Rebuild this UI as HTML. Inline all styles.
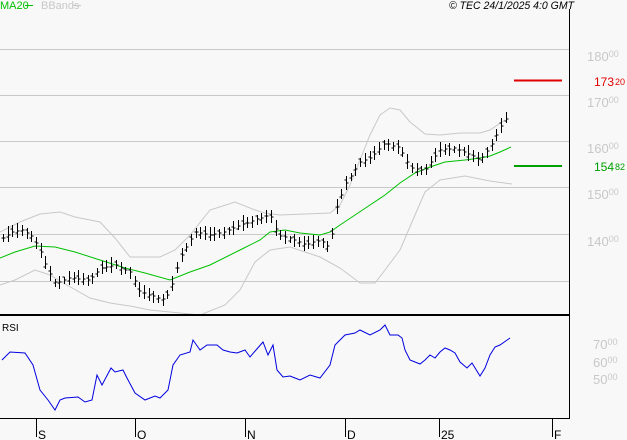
<!DOCTYPE html>
<html><head><meta charset="utf-8"><style>
html,body{margin:0;padding:0;background:#f8f8f8;width:627px;height:440px;overflow:hidden}
svg{display:block;font-family:"Liberation Sans",sans-serif}
</style></head><body>
<svg id="s" width="627" height="440" viewBox="0 0 627 440" xmlns="http://www.w3.org/2000/svg">
<rect width="627" height="440" fill="#f8f8f8"/>
<g stroke="#c8c8c8" stroke-width="1">
<line x1="0" y1="49.5" x2="569" y2="49.5"/><line x1="0" y1="95.5" x2="569" y2="95.5"/>
<line x1="0" y1="141.5" x2="569" y2="141.5"/><line x1="0" y1="187.5" x2="569" y2="187.5"/>
<line x1="0" y1="234.5" x2="569" y2="234.5"/><line x1="0" y1="281.5" x2="569" y2="281.5"/>
</g>
<g fill="#c8c8c8" font-size="13">
<text x="587" y="61">180<tspan font-size="9" dy="-4">00</tspan></text>
<text x="587" y="107">170<tspan font-size="9" dy="-4">00</tspan></text>
<text x="587" y="153">160<tspan font-size="9" dy="-4">00</tspan></text>
<text x="587" y="199">150<tspan font-size="9" dy="-4">00</tspan></text>
<text x="587" y="246">140<tspan font-size="9" dy="-4">00</tspan></text>
<text x="593" y="349">70<tspan font-size="9" dy="-4">00</tspan></text>
<text x="593" y="367">60<tspan font-size="9" dy="-4">00</tspan></text>
<text x="593" y="384">50<tspan font-size="9" dy="-4">00</tspan></text>
</g>
<text x="0" y="9" font-size="11" fill="#00c000">MA20</text><line x1="25" y1="5.5" x2="33" y2="5.5" stroke="#00c000"/>
<text x="41" y="9" font-size="11" fill="#c8c8c8">BBands</text><line x1="73" y1="5.5" x2="81" y2="5.5" stroke="#c8c8c8"/>
<text x="449" y="9" font-size="11" font-style="italic" fill="#000" textLength="125" lengthAdjust="spacingAndGlyphs">© TEC 24/1/2025 4:0 GMT</text>
<polyline fill="none" stroke="#c8c8c8" points="0,232 20,222 40,214 60,212 75,217 100,222 115,238 130,257 160,257 175,250 190,235 210,210 235,202 255,210 265,213 280,215 330,213 340,205 350,185 360,160 370,135 380,115 390,108 400,110 410,122 425,134 440,135 460,133 480,133 490,130 505,120"/>
<polyline fill="none" stroke="#c8c8c8" points="0,285 15,280 35,270 50,275 65,284 90,298 110,303 130,306 150,310 170,312 200,315 225,305 240,290 255,262 270,250 290,247 320,257 340,268 360,283 375,283 385,270 400,250 415,215 425,192 440,180 465,176 490,181 512,184"/>
<polyline fill="none" stroke="#00c000" points="0,258 15,252 35,246 55,247 75,252 100,260 125,268 145,273 170,280 190,272 210,265 240,250 260,240 270,232 285,230 300,233 320,235 330,232 340,225 355,215 370,205 385,195 400,183 415,173 430,167 445,162 465,160 480,158 490,156 500,152 511,147"/>
<g id="bars" stroke="#000" stroke-width="1" fill="none"></g>
<line x1="514" y1="80.5" x2="562" y2="80.5" stroke="#e00000" stroke-width="2"/>
<text x="594" y="86" font-size="12" fill="#e00000">173<tspan font-size="9" dx="1" dy="-1">20</tspan></text>
<line x1="514" y1="166" x2="562" y2="166" stroke="#00a000" stroke-width="2"/>
<text x="594" y="171" font-size="12" fill="#00a000">154<tspan font-size="9" dx="1" dy="-1">82</tspan></text>
<line x1="569.5" y1="9" x2="569.5" y2="419" stroke="#000"/>
<rect x="0" y="314" width="570" height="2" fill="#000"/>
<line x1="0" y1="418.5" x2="570" y2="418.5" stroke="#000"/>
<text x="2" y="331" font-size="10" fill="#000">RSI</text>
<polyline fill="none" stroke="#0000e0" points="2,360 10,352 25,353 33,365 40,390 48,400 55,410 60,400 65,398 78,397 85,402 92,400 97,375 102,385 111,368 115,372 123,370 127,378 135,393 145,400 155,396 160,398 168,390 173,365 180,355 190,352 193,340 200,350 207,345 217,345 223,350 230,352 237,353 245,350 250,357 256,350 263,342 268,355 273,345 277,370 283,377 290,376 295,378 300,380 310,375 320,378 330,365 335,345 345,335 355,333 360,330 370,335 380,330 385,325 390,335 398,335 402,338 405,350 410,360 420,364 425,360 430,355 435,358 440,352 445,348 450,350 455,353 460,362 467,368 472,363 480,376 485,368 490,355 495,347 500,345 510,338"/>
<g stroke="#000"><line x1="36.5" y1="419" x2="36.5" y2="437"/><line x1="135.5" y1="419" x2="135.5" y2="437"/><line x1="245.5" y1="419" x2="245.5" y2="437"/><line x1="345.5" y1="419" x2="345.5" y2="437"/><line x1="439.5" y1="419" x2="439.5" y2="437"/><line x1="552.5" y1="419" x2="552.5" y2="437"/></g>
<g font-size="12" fill="#000"><text x="38" y="439">S</text><text x="137" y="439">O</text><text x="247" y="439">N</text><text x="347" y="439">D</text><text x="441" y="439">25</text><text x="554" y="439">F</text></g>
</svg>
<script>
var P=[[3,238],[12,232],[22,230],[32,236],[40,250],[47,268],[55,283],[70,278],[90,280],[100,268],[115,265],[130,272],[140,292],[155,297],[165,300],[172,285],[180,258],[195,232],[210,235],[225,232],[240,225],[255,220],[270,215],[278,235],[295,240],[305,245],[320,240],[330,248],[335,212],[345,185],[360,162],[370,158],[385,143],[400,148],[410,168],[425,170],[440,150],[455,148],[470,155],[480,160],[490,148],[500,128],[510,112]];
function yAt(x){for(var i=0;i<P.length-1;i++){if(x<=P[i+1][0]){var t=(x-P[i][0])/(P[i+1][0]-P[i][0]);return P[i][1]+t*(P[i+1][1]-P[i][1]);}}return P[P.length-1][1];}
var d="";for(var x=3,k=0;x<=510;x+=4.7,k++){var xx=Math.round(x)+0.5,c=yAt(x),r=4+3*Math.abs(Math.sin(k*1.7));var h=Math.round(c-r-Math.sin(k*0.9)*2),l=Math.round(c+r);var o=Math.round(c+Math.sin(k*2.3)*3);d+="M"+xx+" "+h+"V"+l+"M"+(xx-2)+" "+o+"H"+xx+"M"+xx+" "+Math.round(c)+"H"+(xx+2);}
var p=document.createElementNS("http://www.w3.org/2000/svg","path");p.setAttribute("d",d);document.getElementById("bars").appendChild(p);
</script>
</body></html>
